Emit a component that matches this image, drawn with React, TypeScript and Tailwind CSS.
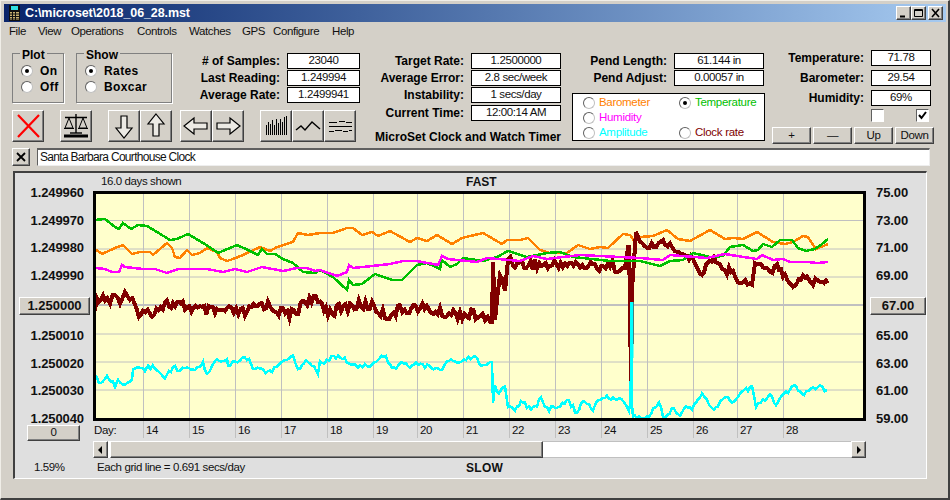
import type { ReactNode } from "react";

type Pt = [number, number];

const orange: Pt[] = [[95,249],[102,254],[115,248],[123,245],[132,254],[140,252],[150,252],[153,255],[167,243],[172,248],[175,257],[180,258],[187,250],[192,255],[200,253],[207,248],[217,252],[220,258],[227,261],[233,259],[243,255],[260,247],[270,251],[277,247],[293,242],[298,233],[308,235],[320,233],[333,233],[347,228],[353,228],[362,235],[372,232],[378,236],[390,231],[410,242],[417,238],[427,241],[437,235],[452,244],[462,238],[483,233],[502,244],[507,240],[520,240],[528,238],[540,250],[550,253],[567,253],[578,245],[590,249],[600,247],[608,248],[623,234],[630,235],[635,242],[640,237],[653,236],[667,230],[678,239],[690,241],[710,230],[725,239],[733,238],[743,239],[757,232],[773,242],[785,244],[793,242],[803,236],[808,237],[816,249],[828,244]];
const green: Pt[] = [[95,220],[105,219],[115,227],[119,229],[123,223],[131,229],[138,225],[147,226],[157,232],[170,240],[177,239],[188,234],[203,243],[218,253],[237,245],[248,250],[258,255],[262,249],[267,254],[275,254],[283,259],[293,263],[303,272],[315,273],[320,270],[333,277],[347,290],[349,280],[353,285],[362,284],[375,274],[392,280],[402,280],[417,265],[427,263],[440,269],[442,260],[450,267],[457,264],[463,258],[483,261],[497,257],[508,251],[527,257],[547,253],[560,252],[573,257],[610,261],[640,261],[660,266],[670,261],[683,260],[693,253],[710,257],[723,256],[730,247],[743,245],[753,251],[758,250],[763,244],[772,247],[780,240],[792,240],[798,248],[806,251],[815,249],[822,244],[828,239]];
const magenta: Pt[] = [[95,268],[105,269],[112,272],[119,272],[122,265],[125,267],[143,269],[155,269],[167,273],[178,269],[207,269],[223,272],[235,269],[247,272],[262,267],[283,271],[297,268],[307,268],[315,271],[320,270],[337,276],[347,272],[349,265],[353,268],[363,267],[390,264],[403,261],[417,261],[438,265],[442,256],[448,259],[477,262],[487,258],[520,261],[533,256],[547,259],[580,255],[640,258],[663,260],[670,255],[707,258],[725,254],[737,256],[757,259],[762,255],[773,260],[783,259],[790,262],[807,262],[817,263],[828,262]];
const cyanA: Pt[] = [[95,375],[101,384],[107,377],[115,385],[118,378],[123,386],[132,380],[133,372],[140,368],[145,372],[148,367],[155,367],[165,376],[175,367],[180,372],[185,367],[193,370],[203,364],[207,374],[212,365],[217,359],[227,360],[228,367],[233,362],[247,358],[253,367],[270,372],[283,362],[293,356],[298,368],[308,360],[318,372],[320,363],[336,356],[360,367],[372,365],[384,355],[394,370],[402,360],[410,368],[416,363],[438,370],[449,362],[477,358],[481,368],[491,362]];
const cyanB: Pt[] = [[497,392],[505,387],[508,407],[515,408],[521,402],[531,409],[541,400],[547,410],[569,402],[577,413],[583,402],[593,408],[603,396],[611,400],[621,398],[629,411]];
const cyanC: Pt[] = [[635,417],[645,419],[651,412],[659,402],[663,417],[674,408],[680,415],[688,406],[692,408],[696,401],[702,395],[714,409],[724,397],[734,402],[742,390],[752,388],[756,406],[770,395],[776,405],[786,392],[794,387],[804,393],[820,386],[827,390]];
const maroonA: Pt[] = [[95,307],[99,296],[105,296],[110,302],[115,292],[120,302],[125,296],[130,300],[137,311],[143,313],[150,313],[165,303],[175,306],[185,306],[200,310],[215,312],[225,311],[245,313],[262,304],[270,306],[283,313],[296,314],[303,300],[320,302],[330,312],[350,306],[372,305],[385,316],[400,310],[418,307],[440,313],[460,314],[478,315],[490,322]];
const maroonB: Pt[] = [[497,303],[500,275],[505,287],[508,258],[520,265],[535,264],[550,266],[565,263],[580,266],[595,266],[610,265],[622,268]];
const maroonC: Pt[] = [[640,240],[647,248],[663,242],[670,245],[677,250],[683,255],[693,260],[702,273],[712,260],[720,263],[725,272],[733,269],[738,280],[743,283],[752,283],[755,262],[763,267],[770,273],[777,263],[785,278],[793,285],[803,275],[813,283],[820,279],[828,283]];

const noise = (i: number) => {
  const v = Math.sin(i * 12.9898) * 43758.5453;
  return v - Math.floor(v) - 0.5;
};

// break a traced line up into short wiggly steps
const jitter = (pts: Pt[], amp: number, seed: number): Pt[] => {
  const out: Pt[] = [];
  let n = seed;
  for (let i = 0; i < pts.length - 1; i++) {
    const [x0, y0] = pts[i];
    const [x1, y1] = pts[i + 1];
    const steps = Math.max(1, Math.round((x1 - x0) / 2.2));
    for (let s = 0; s < steps; s++) {
      const t = s / steps;
      n++;
      out.push([x0 + (x1 - x0) * t, y0 + (y1 - y0) * t + noise(n) * amp]);
    }
  }
  out.push(pts[pts.length - 1]);
  return out;
};

const line = (pts: Pt[]) => pts.map((p) => p.join(",")).join(" ");

const maroonPts: Pt[] = [
  ...jitter(maroonA, 11, 10),
  [492, 322],[493, 262],[495, 320],
  ...jitter(maroonB, 11, 200),
  [625, 268],[628.5, 245],[630, 290],[631, 403],[632, 290],[636, 232],
  ...jitter(maroonC, 7, 400),
];
const cyanPts: Pt[] = [
  ...jitter(cyanA, 5, 600),
  [492, 362],[493, 403],[495, 385],
  ...jitter(cyanB, 6, 800),
  [630, 405],[631.5, 358],[631.5, 302],[632, 405],[633, 417],
  ...jitter(cyanC, 5, 900),
];

const vLines = [143, 189, 235, 281, 327, 373, 417, 463, 509, 555, 601, 647, 693, 737, 783];
const hLines = [220.5, 249, 277, 334, 362, 390];
const days = [14, 15, 16, 17, 18, 19, 20, 21, 22, 23, 24, 25, 26, 27, 28];

const raised = "border border-t-white border-l-white border-r-[#404040] border-b-[#404040] shadow-[inset_-1px_-1px_0_#808080] bg-[#d4d0c8]";
const small = "text-[11.5px] tracking-[-0.4px] leading-none text-[#111]";

const Btn = ({ className = "", children }: { className?: string; children?: ReactNode }) => (
  <div className={`${raised} flex items-center justify-center shrink-0 ${className}`}>{children}</div>
);

const Radio = ({ on }: { on?: boolean }) => (
  <span className="w-3 h-3 rounded-full border border-t-[#606060] border-l-[#606060] border-r-[#c0c0c0] border-b-[#c0c0c0] bg-white flex items-center justify-center shrink-0">
    {on && <span className="w-1 h-1 rounded-full bg-black" />}
  </span>
);

const Field = ({ label, value, w }: { label: string; value: string; w: string }) => (
  <div className="flex items-center justify-end gap-[7px]">
    <span className="font-bold text-[12px] leading-4 text-black whitespace-nowrap">{label}</span>
    <span className={`${w} h-4 border border-black bg-white flex items-center justify-center ${small}`}>{value}</span>
  </div>
);

const Group = ({ title, className, children }: { title: string; className: string; children: ReactNode }) => (
  <div className={`relative border border-[#808080] shadow-[1px_1px_0_#fff] h-[50px] pt-[2px] pl-[8px] flex flex-col justify-center shrink-0 ${className}`}>
    <span className="absolute -top-[7px] left-[7px] bg-[#d4d0c8] px-[2px] font-bold text-[12px] leading-4">{title}</span>
    {children}
  </div>
);

const Opt = ({ label, on }: { label: string; on?: boolean }) => (
  <div className="flex items-center gap-[7px] font-bold text-[12px] tracking-[0.4px] leading-4">
    <Radio on={on} />
    <span>{label}</span>
  </div>
);

const Arrow = ({ points }: { points: string }) => (
  <svg width="30" height="30" viewBox="0 0 30 30">
    <polygon points={points} fill="#eceae4" stroke="#000" strokeWidth="1.2" />
  </svg>
);

const ScaleIcon = () => (
  <svg width="30" height="30" viewBox="0 0 30 30" fill="none" stroke="#000">
    <path d="M4 6.5H26M15 3V22" strokeWidth="1.4" />
    <path d="M8 7L4 17H12ZM22 7L18 17H26Z" strokeWidth="1" />
    <path d="M3 17.5H13M17 17.5H27" strokeWidth="1.2" />
    <path d="M9 22H21" strokeWidth="1.4" />
    <path d="M3 25H27" strokeWidth="3" />
  </svg>
);

const BarsIcon = () => (
  <svg width="30" height="30" viewBox="0 0 30 30" stroke="#000" strokeWidth="1">
    {[[5, 14], [7, 11], [9, 13], [11, 9], [13, 14], [15, 8], [17, 12], [19, 8], [21, 11], [23, 6], [25, 5]].map(([x, y]) => (
      <line key={x} x1={x + 0.5} x2={x + 0.5} y1={y} y2={24} />
    ))}
  </svg>
);

const ZigIcon = () => (
  <svg width="30" height="30" viewBox="0 0 30 30" fill="none" stroke="#000" strokeWidth="1.4">
    <polyline points="3,19 8,15 12,19 19,11 27,18" />
  </svg>
);

const MultiIcon = () => (
  <svg width="30" height="30" viewBox="0 0 30 30" fill="none" stroke="#000" strokeWidth="1">
    <path d="M4 11.5H12M14 10.5H20M21 11.5H27M4 15.5H27" />
    <path d="M4 20.5H9M10 19.5H17M18 20.5H23M24 19.5H27" />
  </svg>
);

const CalcIcon = () => (
  <svg width="11" height="16" viewBox="0 0 11 16">
    <rect width="11" height="16" fill="#101010" />
    <rect x="2" y="1" width="7" height="4" fill="#30e0e0" />
    <path d="M1 7H10V15H1Z" fill="#c8b070" />
    <path d="M1 9H10M1 11.5H10M1 14H10M3.5 7V15M6.5 7V15" stroke="#101010" strokeWidth="1" />
  </svg>
);

const CaptionBtn = ({ children }: { children: ReactNode }) => (
  <div className={`${raised} w-[15px] h-[14px] flex items-center justify-center`}>
    <svg width="11" height="10" viewBox="0 0 11 10" fill="none" stroke="#000">{children}</svg>
  </div>
);

const YLabel = ({ children }: { children: ReactNode }) => (
  <span className="font-bold text-[13px] leading-none tracking-[-0.1px] text-[#111]">{children}</span>
);

const Chart = () => (
  <svg width="773" height="250" viewBox="93 190 773 250" className="block shrink-0">
    <rect x="94.5" y="192.5" width="770" height="227" fill="#ffffcc" />
    {vLines.map((x) => (
      <line key={x} x1={x + 0.5} x2={x + 0.5} y1="192" y2="438" stroke="#c0c0c0" />
    ))}
    {hLines.map((y) => (
      <line key={y} x1="95" x2="864" y1={y} y2={y} stroke="#c0c0c0" />
    ))}
    <line x1="95" x2="864" y1="305" y2="305" stroke="#c0c0c0" strokeWidth="2" />
    <polyline points={line(orange)} fill="none" stroke="#ff8000" strokeWidth="2.5" shapeRendering="crispEdges" />
    <polyline points={line(maroonPts)} fill="none" stroke="#800000" strokeWidth="4" shapeRendering="crispEdges" />
    <polyline points={line(green)} fill="none" stroke="#00c000" strokeWidth="2.5" shapeRendering="crispEdges" />
    <polyline points={line(magenta)} fill="none" stroke="#ff00ff" strokeWidth="2.5" shapeRendering="crispEdges" />
    <polyline points={line(cyanPts)} fill="none" stroke="#00ffff" strokeWidth="2.5" shapeRendering="crispEdges" />
    <rect x="630" y="302" width="3.5" height="56" fill="#00ffff" />
    <rect x="94.5" y="192.5" width="770" height="227" fill="none" stroke="#000" strokeWidth="3" />
    <text x="94" y="434" fontSize="11.5" letterSpacing="-0.3" fill="#111" fontFamily="'Liberation Sans', sans-serif">Day:</text>
    {days.map((d, i) => (
      <text key={d} x={vLines[i] + 3} y="434" fontSize="11.5" letterSpacing="-0.3" fill="#111" fontFamily="'Liberation Sans', sans-serif">{d}</text>
    ))}
  </svg>
);

export default function App() {
  return (
    <div className="w-[950px] h-[500px] bg-[#d4d0c8] border-t border-l border-t-[#f0eee8] border-l-[#f0eee8] border-b-2 border-r-2 border-b-[#404040] border-r-[#404040] pt-[3px] pl-[3px] pr-[2px] font-['Liberation_Sans',sans-serif] text-black overflow-hidden">
      {/* Title bar */}
      <div className="h-[18px] w-[942px] bg-gradient-to-r from-[#0a246a] to-[#a6caf0] flex items-center pl-[5px] pr-[3px]">
        <CalcIcon />
        <span className="ml-[5px] text-white font-bold text-[12.5px] tracking-[-0.1px] whitespace-nowrap">C:\microset\2018_06_28.mst</span>
        <div className="ml-auto flex items-center">
          <CaptionBtn><path d="M2 8.5H7" strokeWidth="2" /></CaptionBtn>
          <CaptionBtn><path d="M1.5 1.5H9.5V8.5H1.5ZM1.5 2.5H9.5" /></CaptionBtn>
          <div className="w-[2px]" />
          <CaptionBtn><path d="M2 1L9 9M9 1L2 9" strokeWidth="1.6" /></CaptionBtn>
        </div>
      </div>

      {/* Menu */}
      <div className={`h-5 flex items-center pl-[5px] ${small}`}>
        <span className="w-[29px]">File</span>
        <span className="w-[33px]">View</span>
        <span className="w-[66px]">Operations</span>
        <span className="w-[52px]">Controls</span>
        <span className="w-[53px]">Watches</span>
        <span className="w-[31px]">GPS</span>
        <span className="w-[59px]">Configure</span>
        <span>Help</span>
      </div>

      {/* Controls */}
      <div className="flex h-[105px] pl-[8px]">
        <div className="w-[348px] shrink-0 flex flex-col pt-[11px]">
          <div className="flex h-[51px]">
            <Group title="Plot" className="w-[52px]">
              <Opt label="On" on />
              <Opt label="Off" />
            </Group>
            <Group title="Show" className="w-[96px] ml-[12px]">
              <Opt label="Rates" on />
              <Opt label="Boxcar" />
            </Group>
            <div className="flex-1 flex flex-col gap-px">
              <Field label="# of Samples:" value="23040" w="w-[73px]" />
              <Field label="Last Reading:" value="1.249994" w="w-[73px]" />
              <Field label="Average Rate:" value="1.2499941" w="w-[73px]" />
            </div>
          </div>
          <div className="flex mt-[6px]">
            <Btn className="w-8 h-8">
              <svg width="30" height="30" viewBox="0 0 30 30" stroke="#ff0000" strokeWidth="2.2">
                <path d="M5 4L26 26M26 4L5 26" />
              </svg>
            </Btn>
            <Btn className="w-8 h-8 ml-4"><ScaleIcon /></Btn>
            <Btn className="w-8 h-8 ml-4"><Arrow points="12,5 18,5 18,17 23,17 15,27 7,17 12,17" /></Btn>
            <Btn className="w-8 h-8"><Arrow points="15,3 23,13 18,13 18,25 12,25 12,13 7,13" /></Btn>
            <Btn className="w-8 h-8 ml-2"><Arrow points="3,15 13,7 13,12 26,12 26,18 13,18 13,23" /></Btn>
            <Btn className="w-8 h-8"><Arrow points="27,15 17,7 17,12 4,12 4,18 17,18 17,23" /></Btn>
            <Btn className="w-8 h-8 ml-4"><BarsIcon /></Btn>
            <Btn className="w-8 h-8"><ZigIcon /></Btn>
            <Btn className="w-8 h-8"><MultiIcon /></Btn>
          </div>
        </div>

        <div className="w-[189px] ml-[12px] shrink-0 flex flex-col pt-[11px]">
          <div className="flex flex-col gap-px">
            <Field label="Target Rate:" value="1.2500000" w="w-[90px]" />
            <Field label="Average Error:" value="2.8 sec/week" w="w-[90px]" />
            <Field label="Instability:" value="1 secs/day" w="w-[90px]" />
            <div className="mt-px">
              <Field label="Current Time:" value="12:00:14 AM" w="w-[90px]" />
            </div>
          </div>
          <div className="mt-[8px] text-right font-bold text-[12px] leading-4 whitespace-nowrap">MicroSet Clock and Watch Timer</div>
        </div>

        <div className="w-[193px] ml-[11px] shrink-0 flex flex-col pt-[11px]">
          <div className="flex flex-col gap-px pr-px">
            <Field label="Pend Length:" value="61.144 in" w="w-[90px]" />
            <Field label="Pend Adjust:" value="0.00057 in" w="w-[90px]" />
          </div>
          <div className="mt-[7px] h-[48px] border border-black bg-white grid grid-cols-[96px_1fr] items-center pl-[10px] pt-px text-[11.5px] tracking-[-0.3px] leading-none">
            <div className="flex items-center gap-[4px]"><Radio /><span className="text-[#ff8000]">Barometer</span></div>
            <div className="flex items-center gap-[4px]"><Radio on /><span className="text-[#00c000]">Temperature</span></div>
            <div className="flex items-center gap-[4px] col-span-2"><Radio /><span className="text-[#ff00ff]">Humidity</span></div>
            <div className="flex items-center gap-[4px]"><Radio /><span className="text-[#00ffff]">Amplitude</span></div>
            <div className="flex items-center gap-[4px]"><Radio /><span className="text-[#800000]">Clock rate</span></div>
          </div>
        </div>

        <div className="w-[162px] ml-[7px] shrink-0 flex flex-col pt-[8px]">
          <div className="flex flex-col gap-1 pr-[3px]">
            <Field label="Temperature:" value="71.78" w="w-[60px]" />
            <Field label="Barometer:" value="29.54" w="w-[60px]" />
            <Field label="Humidity:" value="69%" w="w-[60px]" />
          </div>
          <div className="flex mt-[3px] pl-[99px] gap-[32px]">
            <span className="w-[13px] h-[13px] border border-t-[#606060] border-l-[#606060] border-r-white border-b-white bg-white" />
            <span className="w-[13px] h-[13px] border border-t-[#606060] border-l-[#606060] border-r-white border-b-white bg-white flex items-center justify-center">
              <svg width="11" height="11" viewBox="0 0 11 11" fill="none" stroke="#000" strokeWidth="2"><path d="M2 5L4.5 8L9 2" /></svg>
            </span>
          </div>
          <div className={`flex mt-[5px] gap-[2px] ${small}`}>
            <Btn className="w-[39px] h-[17px]">+</Btn>
            <Btn className="w-[39px] h-[17px]">—</Btn>
            <Btn className="w-[39px] h-[17px]">Up</Btn>
            <Btn className="w-[39px] h-[17px]">Down</Btn>
          </div>
        </div>
      </div>

      {/* Title line */}
      <div className="flex items-center h-[19px] pl-[8px]">
        <Btn className="w-[18px] h-[18px]">
          <svg width="10" height="10" viewBox="0 0 10 10" stroke="#000" strokeWidth="1.8"><path d="M1 1L9 9M9 1L1 9" /></svg>
        </Btn>
        <div className="ml-[7px] w-[893px] h-[18px] bg-white border border-t-[#606060] border-l-[#606060] border-r-[#eeeeee] border-b-[#eeeeee] border-t-2 flex items-center pl-[2px] text-[12px] tracking-[-0.7px] leading-none text-[#111]">
          Santa Barbara Courthouse Clock
        </div>
      </div>

      {/* Chart panel */}
      <div className="ml-[9px] mt-[5px] w-[914px] h-[308px] bg-[#dfdfdf] border-t-2 border-l-2 border-t-[#404040] border-l-[#404040] border-b border-r border-b-white border-r-white flex">
        <div className="w-[78px] shrink-0 flex flex-col">
          <div className="h-[252px] pt-[13px] flex flex-col justify-between items-end pr-[9px]">
            <YLabel>1.249960</YLabel>
            <YLabel>1.249970</YLabel>
            <YLabel>1.249980</YLabel>
            <YLabel>1.249990</YLabel>
            <Btn className="w-[71px] h-[18px] -mr-[6px] font-bold text-[13px] leading-none text-[#111]">1.250000</Btn>
            <YLabel>1.250010</YLabel>
            <YLabel>1.250020</YLabel>
            <YLabel>1.250030</YLabel>
            <YLabel>1.250040</YLabel>
          </div>
          <Btn className={`w-[53px] h-[16px] ml-[12px] ${small}`}>0</Btn>
          <div className={`mt-[21px] pl-[19px] ${small}`}>1.59%</div>
        </div>

        <div className="w-[773px] shrink-0 flex flex-col">
          <div className={`h-[17px] relative flex items-center pl-[8px] ${small}`}>
            <span>16.0 days shown</span>
            <span className="absolute left-[373px] font-bold text-[12px] tracking-normal">FAST</span>
          </div>
          <Chart />
          <div className="h-[17px] mt-px flex">
            <Btn className="w-[15px] h-[17px]">
              <svg width="5" height="8" viewBox="0 0 5 8"><path d="M4 0V8L0 4Z" fill="#000" /></svg>
            </Btn>
            <div className="w-[2px] bg-[#ffffff]" />
            <div className={`${raised} w-[433px] h-[17px]`} />
            <div className="flex-1 bg-white border-y border-y-[#c0c0c0]" />
            <Btn className="w-[15px] h-[17px]">
              <svg width="5" height="8" viewBox="0 0 5 8"><path d="M1 0V8L5 4Z" fill="#000" /></svg>
            </Btn>
          </div>
          <div className={`h-[20px] relative flex items-center pl-[4px] ${small}`}>
            <span>Each grid line = 0.691 secs/day</span>
            <span className="absolute left-[373px] font-bold text-[12px] tracking-[0.3px]">SLOW</span>
          </div>
        </div>

        <div className="flex-1 pt-[13px] h-[252px] flex flex-col justify-between items-start pl-[10px]">
          <YLabel>75.00</YLabel>
          <YLabel>73.00</YLabel>
          <YLabel>71.00</YLabel>
          <YLabel>69.00</YLabel>
          <Btn className="w-[56px] h-[18px] -ml-[6px] font-bold text-[13px] leading-none text-[#111]">67.00</Btn>
          <YLabel>65.00</YLabel>
          <YLabel>63.00</YLabel>
          <YLabel>61.00</YLabel>
          <YLabel>59.00</YLabel>
        </div>
      </div>
    </div>
  );
}
